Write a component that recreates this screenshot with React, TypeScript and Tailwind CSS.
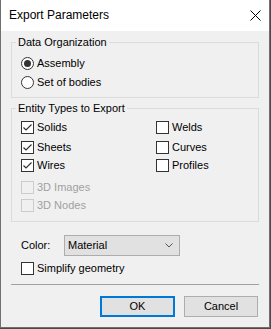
const Check = ({ checked, disabled }: { checked?: boolean; disabled?: boolean }) => (
  <span
    className={`flex h-[13px] w-[13px] shrink-0 items-center justify-center border ${
      disabled ? "border-[#cccccc] bg-[#f0f0f0]" : "border-[#333333] bg-white"
    }`}
  >
    {checked && (
      <svg width="11" height="11" viewBox="0 0 11 11">
        <path d="M1.5 5.5 L4 8 L9.5 2.5" stroke="#333333" strokeWidth="1.2" fill="none" />
      </svg>
    )}
  </span>
);

const CheckRow = ({
  label,
  checked,
  disabled,
  className = "",
}: {
  label: string;
  checked?: boolean;
  disabled?: boolean;
  className?: string;
}) => (
  <div className={`flex h-[13px] items-center gap-[3px] ${className}`}>
    <Check checked={checked} disabled={disabled} />
    <span className={disabled ? "text-[#a0a0a0]" : "text-black"}>{label}</span>
  </div>
);

const Radio = ({ label, checked, className = "" }: { label: string; checked?: boolean; className?: string }) => (
  <div className={`flex h-[13px] items-center gap-[3px] ${className}`}>
    <span className="flex h-[13px] w-[13px] items-center justify-center rounded-full border border-[#333333] bg-white">
      {checked && <span className="h-[7px] w-[7px] rounded-full bg-[#333333]" />}
    </span>
    <span>{label}</span>
  </div>
);

const App = () => {
  return (
    <div className="h-[329px] w-[271px] bg-[#4a4a4a] font-['Liberation_Sans',Arial,sans-serif] text-[11px] leading-[13px] text-black">
      <div className="flex h-[328px] w-[270px] flex-col border-x border-b border-[#707070] bg-[#f0f0f0]">
        {/* title bar */}
        <div className="flex h-[31px] shrink-0 items-center justify-between bg-white pl-[8px] pr-[8px]">
          <span className="text-[12px]">Export Parameters</span>
          <svg width="11" height="11" viewBox="0 0 11 11">
            <path d="M0.5 0.5 L10.5 10.5 M10.5 0.5 L0.5 10.5" stroke="#000" strokeWidth="1" />
          </svg>
        </div>

        <div className="flex flex-col px-[10px]">
          {/* Data Organization */}
          <fieldset className="mt-[4px] h-[63px] border border-[#dcdcdc]">
            <legend className="ml-[4px] px-[2px] leading-[14px]">Data Organization</legend>
            <div className="flex flex-col pl-[9px]">
              <Radio label="Assembly" checked className="mt-[8px]" />
              <Radio label="Set of bodies" className="mt-[6px]" />
            </div>
          </fieldset>

          {/* Entity Types */}
          <fieldset className="mt-[3px] h-[121px] border border-[#dcdcdc]">
            <legend className="ml-[4px] px-[2px] leading-[14px]">Entity Types to Export</legend>
            <div className="mt-[6px] grid grid-cols-[135px_1fr] pl-[9px]">
              <div className="flex flex-col">
                <CheckRow label="Solids" checked />
                <CheckRow label="Sheets" checked className="mt-[7px]" />
                <CheckRow label="Wires" checked className="mt-[5px]" />
                <CheckRow label="3D Images" disabled className="mt-[9px]" />
                <CheckRow label="3D Nodes" disabled className="mt-[5px]" />
              </div>
              <div className="flex flex-col">
                <CheckRow label="Welds" />
                <CheckRow label="Curves" className="mt-[7px]" />
                <CheckRow label="Profiles" className="mt-[5px]" />
              </div>
            </div>
          </fieldset>

          {/* Color */}
          <div className="mt-[13px] flex items-center pl-[10px]">
            <span className="w-[43px]">Color:</span>
            <div className="flex h-[21px] w-[116px] items-center justify-between border border-[#adadad] bg-[#e1e1e1] pl-[3px] pr-[6px]">
              <span>Material</span>
              <svg width="8" height="5" viewBox="0 0 8 5">
                <path d="M0.5 0.5 L4 4 L7.5 0.5" stroke="#555" strokeWidth="1" fill="none" />
              </svg>
            </div>
          </div>

          <CheckRow label="Simplify geometry" className="ml-[10px] mt-[6px]" />

          {/* separator */}
          <div className="mt-[9px] h-px w-[248px] bg-[#a0a0a0]" />

          {/* buttons */}
          <div className="mt-[11px] flex justify-end gap-[9px] pr-[1px]">
            <button className="h-[21px] w-[75px] border-2 border-[#0078d7] bg-[#e1e1e1]">OK</button>
            <button className="h-[21px] w-[74px] border border-[#adadad] bg-[#e1e1e1]">Cancel</button>
          </div>
        </div>
      </div>
    </div>
  );
};

export default App;
